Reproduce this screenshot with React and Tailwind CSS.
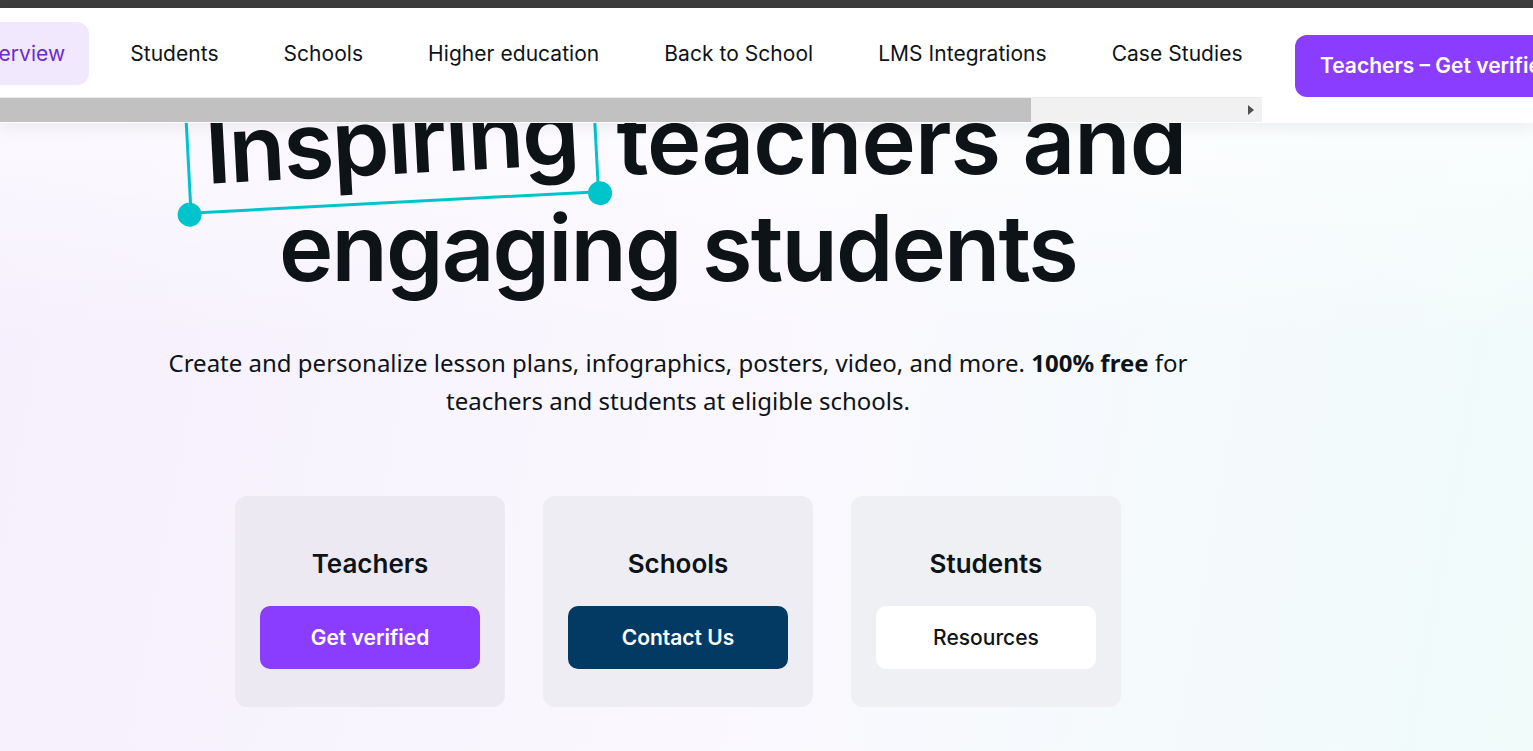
import { useState } from 'react'

const tabs = ['Overview', 'Students', 'Schools', 'Higher education', 'Back to School', 'LMS Integrations', 'Case Studies']

const cards = [
  { title: 'Teachers', label: 'Get verified', bg: 'bg-[#ece9f3]', btn: 'bg-[#8b3dff] text-white font-semibold' },
  { title: 'Schools', label: 'Contact Us', bg: 'bg-[#eeedf3]', btn: 'bg-[#023a63] text-white font-semibold' },
  { title: 'Students', label: 'Resources', bg: 'bg-[#eff0f3]', btn: 'bg-white text-[#0e1318] font-medium' },
]

function Dot({ className }) {
  return <span className={`absolute w-[24px] h-[24px] rounded-full bg-[#00c4cc] ${className}`} />
}

export default function App() {
  const [active] = useState('Overview')

  return (
    <div className="relative min-h-[751px] overflow-hidden font-['Inter','Noto_Sans',sans-serif] text-[#0e1318]">
      {/* top bar */}
      <div className="h-2 bg-[#3c3c3c]" />

      {/* nav overlay */}
      <nav className="absolute top-2 left-0 right-0 z-10 h-[115px] bg-white shadow-[0_6px_14px_rgba(0,0,0,0.06)]">
        <div className="flex items-start">
          <div className="w-[1262px] shrink-0 overflow-hidden">
            <div className="flex gap-[17px] pt-[14px] ml-[-53px]">
              {tabs.map((t) => (
                <div
                  key={t}
                  className={`shrink-0 h-[63px] px-6 flex items-center rounded-xl text-[21px] tracking-[0.002em] whitespace-nowrap ${
                    t === active ? 'bg-[#f1e8fd] text-[#6b2bd0]' : 'text-[#0e1318]'
                  }`}
                >
                  {t}
                </div>
              ))}
            </div>
            {/* scrollbar */}
            <div className="mt-[12px] h-[25px] bg-[#f1f1f1] border-t border-[#ececec] flex items-center">
              <div className="w-[1031px] h-full bg-[#c1c1c1]" />
              <div className="flex-1" />
              <div className="mr-[8px] w-0 h-0 border-y-[5px] border-y-transparent border-l-[6px] border-l-[#505050]" />
            </div>
          </div>
          <button className="ml-[33px] mt-[27px] shrink-0 h-[62px] px-[25px] rounded-xl bg-[#8b3dff] text-white text-[21px] font-semibold whitespace-nowrap">
            Teachers – Get verified
          </button>
        </div>
      </nav>

      {/* hero */}
      <main className="min-h-[743px] bg-[linear-gradient(180deg,rgba(255,255,255,0.9),rgba(255,255,255,0)_45%),linear-gradient(100deg,#f5effd,#faf8fe_50%,#f0fbfa)]">
        <div className="w-[1356px] flex flex-col items-center pt-[79px]">
          <h1 className="text-[92px] leading-[107px] font-semibold tracking-[-0.02em] text-center">
            <span className="flex items-end justify-center pl-[16px]">
              <span className="relative inline-block rotate-[-3deg] px-[19px] mr-[20px]">
                <span className="absolute left-0 right-0 top-[-40px] bottom-[-10px] border-[3px] border-t-0 border-[#00c4cc]" />
                <Dot className="left-[-12px] bottom-[-22px]" />
                <Dot className="right-[-12px] bottom-[-22px]" />
                Inspiring
              </span>
              <span className="tracking-[-0.01em]">teachers and</span>
            </span>
            <span className="block">engaging students</span>
          </h1>

          <p className="mt-[43px] text-[24px] leading-[38px] text-center font-['Noto_Sans',sans-serif]">
            Create and personalize lesson plans, infographics, posters, video, and more. <b className="font-bold">100% free</b> for
            <br />
            teachers and students at eligible schools.
          </p>

          <div className="mt-[76px] flex gap-[38px]">
            {cards.map((c) => (
              <div key={c.title} className={`w-[270px] h-[211px] rounded-xl ${c.bg} flex flex-col items-center pt-[50px]`}>
                <h2 className="text-[26px] font-semibold leading-[36px]">{c.title}</h2>
                <button className={`mt-[24px] w-[220px] h-[63px] rounded-[10px] text-[21px] ${c.btn}`}>{c.label}</button>
              </div>
            ))}
          </div>
        </div>
      </main>
    </div>
  )
}
